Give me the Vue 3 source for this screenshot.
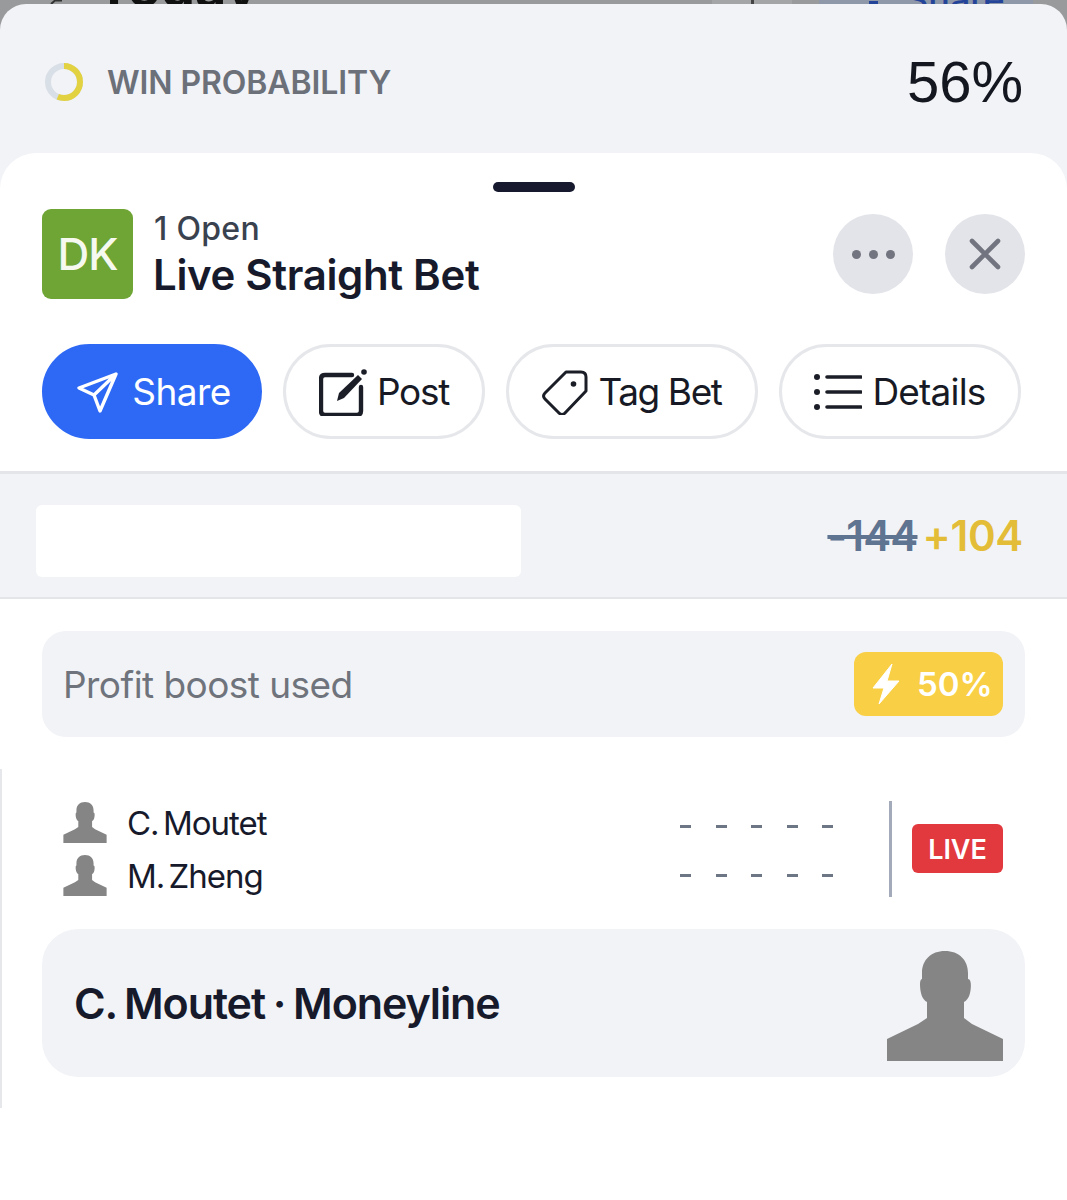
<template>
  <div class="screen">
    <div class="peek">
      <svg class="peek-back" width="14" height="4" viewBox="0 0 14 4">
        <path d="M2 4L6 0.5H13" stroke="#333" stroke-width="2" fill="none" />
      </svg>
      <span class="peek-title">Today</span>
      <span class="peek-btn"><i></i></span>
      <span class="peek-share">
        <i></i>
        Share
      </span>
    </div>
    <div class="sheet">
      <div class="win-row">
        <svg class="ring" width="40" height="40" viewBox="0 0 40 40">
          <circle cx="20" cy="20" r="16" fill="none" stroke="#d9dfe7" stroke-width="6" />
          <circle
            cx="20"
            cy="20"
            r="16"
            fill="none"
            stroke="#e2d242"
            stroke-width="6"
            :stroke-dasharray="`${ringLength * 0.56} ${ringLength}`"
            transform="rotate(-90 20 20)"
          />
        </svg>
        <span class="win-label">WIN PROBABILITY</span>
        <span class="win-value">56%</span>
      </div>

      <div class="panel">
        <div class="handle"></div>

        <div class="head">
          <div class="logo">DK</div>
          <div class="titles">
            <div class="open">1 Open</div>
            <div class="title">Live Straight Bet</div>
          </div>
          <div class="round-btn more"><i></i><i></i><i></i></div>
          <div class="round-btn">
            <svg width="32" height="32" viewBox="0 0 32 32">
              <path d="M3 3L29 29M29 3L3 29" stroke="#72757f" stroke-width="4.6" stroke-linecap="round" />
            </svg>
          </div>
        </div>

        <div class="chips">
          <div class="chip primary chip-share">
            <svg width="42" height="42" viewBox="0 0 42 42" fill="none">
              <path d="M39 3L2 17L17 24L23 40Z M17 24L39 3" stroke="#fff" stroke-width="3.4" stroke-linejoin="round" />
            </svg>
            <span>Share</span>
          </div>
          <div class="chip chip-post">
            <svg width="48" height="48" viewBox="0 0 48 48" fill="none">
              <path d="M33 7H6Q2 7 2 11V43Q2 47 6 47H38Q42 47 42 43V19" stroke="#1b1e27" stroke-width="4.4" stroke-linecap="round" />
              <path d="M18 33L20 25L39 7L43 11L25 30Z" fill="#1b1e27" />
              <circle cx="45" cy="4" r="2.8" fill="#1b1e27" />
            </svg>
            <span>Post</span>
          </div>
          <div class="chip chip-tag">
            <svg width="46" height="46" viewBox="0 0 46 46" fill="none">
              <path d="M24 3H39Q44 3 44 8V22L23 44Q20 47 17 44L3 30Q0 27 3 24Z" stroke="#1b1e27" stroke-width="3" stroke-linejoin="round" />
              <circle cx="31.5" cy="15" r="2.8" fill="#1b1e27" />
            </svg>
            <span>Tag Bet</span>
          </div>
          <div class="chip chip-details">
            <svg width="48" height="36" viewBox="0 0 48 36">
              <circle cx="3" cy="3" r="3" fill="#1b1e27" />
              <circle cx="3" cy="18" r="3" fill="#1b1e27" />
              <circle cx="3" cy="33" r="3" fill="#1b1e27" />
              <path d="M13 3H47M13 18H47M13 33H47" stroke="#1b1e27" stroke-width="3.6" stroke-linecap="round" />
            </svg>
            <span>Details</span>
          </div>
        </div>

        <div class="odds-band">
          <div class="redacted"></div>
          <div class="odds">
            <span class="old">-144</span>
            <span class="new">+104</span>
          </div>
        </div>

        <div class="boost">
          <span class="boost-label">Profit boost used</span>
          <div class="boost-badge">
            <svg width="28" height="42" viewBox="0 0 28 42">
              <path d="M20 1L1 25H12L7 41L27 18H15Z" fill="#fff" stroke="#fff" stroke-width="1" stroke-linejoin="round" />
            </svg>
            <span>50%</span>
          </div>
        </div>

        <div class="leg">
          <div class="match">
            <div class="players">
              <div v-for="p in players" :key="p" class="player">
                <svg class="avatar" width="44" height="41" viewBox="0 0 118 110">
                  <path :d="personPath" fill="#858585" />
                </svg>
                <span>{{ p }}</span>
              </div>
            </div>
            <div class="scores">
              <div v-for="r in 2" :key="r" class="score-row">
                <i v-for="n in 5" :key="n"></i>
              </div>
            </div>
            <div class="status">
              <span class="live">LIVE</span>
            </div>
          </div>

          <div class="pick">
            <span class="pick-name">C. Moutet · Moneyline</span>
            <svg class="pick-person" width="118" height="110" viewBox="0 0 118 110">
              <path :d="personPath" fill="#858585" />
            </svg>
          </div>
        </div>
      </div>
    </div>
  </div>
</template>

<script setup>
const ringLength = 2 * Math.PI * 16;
const players = ["C. Moutet", "M. Zheng"];
const personPath =
  "M59 0C45 0 36 9 36 22V28C33 28 34 38 35 42C36 47 39 50 41 51V67L32 73L1 88V110H117V88L86 73L78 67V51C80 50 83 47 84 42C85 38 86 28 82 28V22C82 9 73 0 59 0Z";
</script>

<style scoped>
.screen {
  width: 1067px;
  height: 1200px;
  overflow: hidden;
  background: #999a9b;
  font-family: Inter, "Liberation Sans", sans-serif;
  color: #171a2b;
}

.peek {
  height: 4px;
  overflow: hidden;
  display: flex;
  align-items: flex-end;
  padding: 0 34px 0 49px;
  background: #999a9b;
}

.peek-back {
  flex: none;
  margin-right: 33px;
}

.peek-title {
  font-size: 54px;
  line-height: 54px;
  font-weight: 700;
  color: #111;
  flex: none;
  margin-bottom: -11px;
}

.peek-btn {
  width: 80px;
  height: 4px;
  flex: none;
  margin-left: auto;
  margin-right: 27px;
  background: #a4a5a6;
  display: flex;
  justify-content: center;
}

.peek-btn i {
  width: 3px;
  height: 4px;
  background: #444;
}

.peek-share {
  width: 214px;
  height: 4px;
  flex: none;
  box-sizing: border-box;
  padding-left: 50px;
  background: #8f98a8;
  color: #24449a;
  font-size: 36px;
  line-height: 10px;
  font-weight: 500;
  display: flex;
  align-items: flex-end;
  gap: 27px;
}

.peek-share i {
  width: 9px;
  height: 3px;
  background: #24449a;
}

.sheet {
  height: 1196px;
  background: #f2f3f7;
  border-radius: 26px 26px 0 0;
  display: flex;
  flex-direction: column;
}

.win-row {
  height: 149px;
  flex: none;
  box-sizing: border-box;
  padding: 7px 44px 0 44px;
  display: flex;
  align-items: center;
}

.ring {
  flex: none;
}

.win-label {
  margin-left: 23px;
  font-size: 32px;
  font-weight: 600;
  letter-spacing: -0.1px;
  color: #6c7079;
}

.win-value {
  margin-left: auto;
  font-family: "Liberation Sans", Arial, sans-serif;
  font-size: 58px;
  line-height: 1;
  color: #14171f;
}

.panel {
  flex: 1;
  background: #fff;
  border-radius: 36px 36px 0 0;
  display: flex;
  flex-direction: column;
}

.handle {
  width: 82px;
  height: 10px;
  border-radius: 5px;
  background: #171a2f;
  margin: 29px auto 0;
  flex: none;
}

.head {
  height: 90px;
  margin-top: 17px;
  padding: 0 42px;
  display: flex;
  align-items: center;
  flex: none;
}

.logo {
  width: 91px;
  height: 90px;
  border-radius: 9px;
  background: #6ea535;
  color: #f6f9f0;
  font-size: 44px;
  font-weight: 500;
  letter-spacing: -1px;
  display: flex;
  align-items: center;
  justify-content: center;
  flex: none;
}

.titles {
  margin-left: 21px;
  flex: 1;
}

.open {
  margin-top: 2px;
  font-size: 32px;
  line-height: 38px;
  font-weight: 500;
  letter-spacing: 0.3px;
  color: #39424e;
}

.title {
  margin-top: 2px;
  margin-left: -1px;
  font-size: 42px;
  line-height: 50px;
  font-weight: 600;
  letter-spacing: -0.35px;
  color: #171a2b;
}

.round-btn {
  width: 80px;
  height: 80px;
  border-radius: 50%;
  background: #e3e4e9;
  display: flex;
  align-items: center;
  justify-content: center;
  flex: none;
  margin-left: 32px;
}

.more {
  gap: 8px;
}

.more i {
  width: 9px;
  height: 9px;
  border-radius: 50%;
  background: #72757f;
}

.chips {
  margin-top: 45px;
  padding: 0 42px;
  display: flex;
  gap: 21px;
  flex: none;
}

.chip {
  height: 95px;
  box-sizing: border-box;
  border: 3px solid #e6e7ea;
  border-radius: 48px;
  display: flex;
  align-items: center;
  justify-content: center;
  font-size: 37px;
  letter-spacing: -0.6px;
  color: #171a24;
  flex: none;
}

.primary {
  background: #2e69f5;
  border-color: #2e69f5;
  color: #fff;
}

.chip-share {
  width: 220px;
  gap: 13px;
  padding-left: 4px;
}

.chip-post {
  width: 202px;
  gap: 10px;
  letter-spacing: -1.3px;
}

.chip-tag {
  width: 252px;
  gap: 10px;
  letter-spacing: -1.4px;
}

.chip-details {
  width: 242px;
  gap: 10px;
  letter-spacing: -0.8px;
}

.odds-band {
  margin-top: 32px;
  height: 128px;
  box-sizing: border-box;
  background: #f2f3f7;
  border-top: 3px solid #e3e5e8;
  border-bottom: 2px solid #e3e5e8;
  padding: 0 44px 0 36px;
  display: flex;
  align-items: center;
  justify-content: space-between;
  flex: none;
}

.redacted {
  width: 485px;
  height: 72px;
  margin-top: 10px;
  background: #fff;
  border-radius: 6px;
}

.odds {
  font-size: 42px;
  font-weight: 600;
  letter-spacing: -0.8px;
  display: flex;
  gap: 5px;
}

.old {
  color: #5f7491;
  text-decoration: line-through;
}

.new {
  color: #e3bd38;
  letter-spacing: -0.3px;
}

.boost {
  margin: 32px 42px 0;
  height: 106px;
  box-sizing: border-box;
  padding: 0 22px 0 21px;
  background: #f2f3f7;
  border-radius: 24px;
  display: flex;
  align-items: center;
  justify-content: space-between;
  flex: none;
}

.boost-label {
  font-size: 37px;
  letter-spacing: -0.55px;
  color: #6f747c;
}

.boost-badge {
  width: 149px;
  height: 64px;
  box-sizing: border-box;
  padding-left: 18px;
  border-radius: 12px;
  background: #f9cf45;
  color: #fff;
  display: flex;
  align-items: center;
  gap: 17px;
  font-size: 33px;
  font-weight: 600;
}

.leg {
  margin-top: 32px;
  height: 339px;
  box-sizing: border-box;
  border-left: 2px solid #e6e7ea;
  flex: none;
  padding: 32px 42px 0 40px;
}

.match {
  height: 96px;
  margin-right: 22px;
  display: flex;
  align-items: center;
}

.players {
  margin-left: 21px;
  flex: 1;
  display: flex;
  flex-direction: column;
  gap: 12px;
}

.player {
  height: 41px;
  display: flex;
  align-items: center;
  gap: 20px;
  font-size: 33px;
  letter-spacing: -1px;
  word-spacing: -4px;
  color: #171a2b;
}

.scores {
  display: flex;
  flex-direction: column;
  gap: 46px;
  margin-right: 56px;
  margin-top: 4px;
}

.score-row {
  display: flex;
  gap: 24.5px;
}

.score-row i {
  width: 11px;
  height: 3px;
  background: #6c7685;
}

.status {
  height: 96px;
  width: 114px;
  box-sizing: border-box;
  border-left: 3px solid #a3abbb;
  display: flex;
  align-items: center;
  justify-content: flex-end;
  flex: none;
}

.live {
  width: 91px;
  height: 49px;
  margin-top: -2px;
  padding-top: 2px;
  box-sizing: border-box;
  border-radius: 6px;
  background: #e2393e;
  color: #fff;
  font-size: 27px;
  font-weight: 600;
  display: flex;
  align-items: center;
  justify-content: center;
}

.pick {
  margin-top: 32px;
  height: 148px;
  box-sizing: border-box;
  padding: 0 21px 0 32px;
  background: #f2f3f7;
  border-radius: 36px;
  display: flex;
  align-items: center;
  justify-content: space-between;
}

.pick-name {
  font-size: 43px;
  font-weight: 600;
  letter-spacing: -1.1px;
  word-spacing: -2px;
  color: #171a2b;
}

.pick-person {
  margin-top: 6px;
}
</style>
